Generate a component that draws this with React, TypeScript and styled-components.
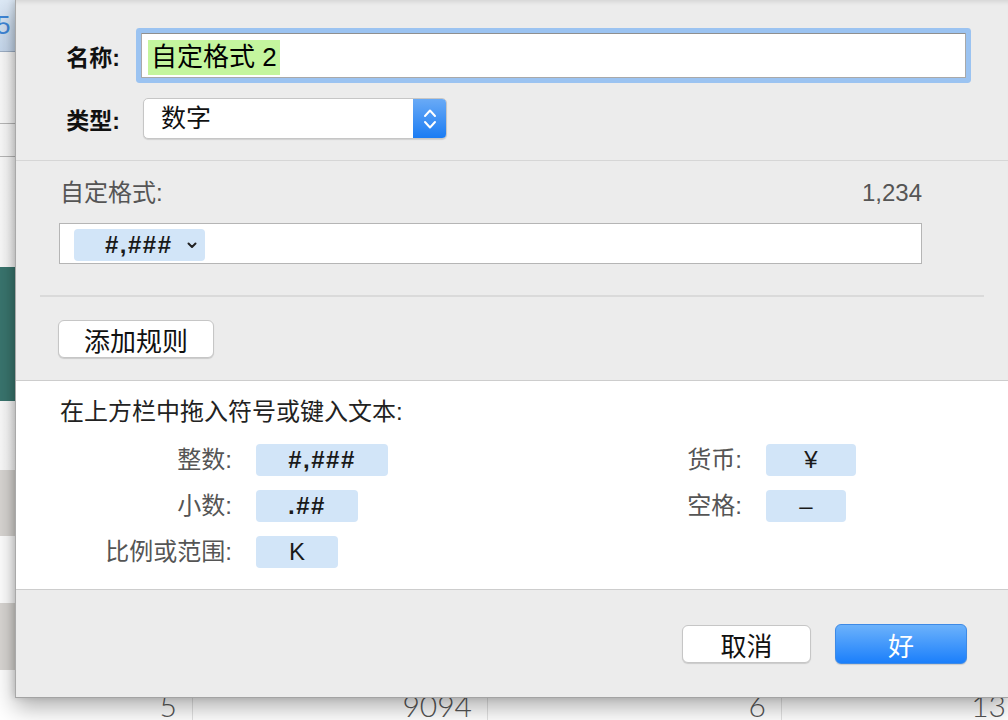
import styled, { createGlobalStyle } from 'styled-components';

const GlobalStyle = createGlobalStyle`
  html, body {
    margin: 0;
    padding: 0;
  }
  body {
    width: 1008px;
    height: 720px;
    overflow: hidden;
    background: #ffffff;
    font-family: "Liberation Sans", "Noto Sans CJK SC", sans-serif;
  }
`;

const Page = styled.div`
  position: relative;
  width: 1008px;
  height: 720px;
  overflow: hidden;
`;

/* spreadsheet behind the sheet dialog */
const Sheet = styled.div`
  display: flex;
  flex-direction: column;
  height: 100%;
`;

const tones = {
  header: 'linear-gradient(#dde9f6, #c7d9ee)',
  plain: 'linear-gradient(90deg, #fbfbfb, #ebebeb)',
  teal: '#3a766f',
  shade: '#d9d6d3',
  white: '#ffffff',
};

const SheetRow = styled.div<{ $h: number; $tone: keyof typeof tones; $line?: string }>`
  flex: none;
  box-sizing: border-box;
  height: ${p => p.$h}px;
  background: ${p => tones[p.$tone]};
  border-bottom: ${p => (p.$line ? `1px solid ${p.$line}` : 'none')};
  display: flex;
`;

const HeaderNum = styled.span`
  margin-left: -4px;
  font-size: 26px;
  line-height: 50px;
  color: #3f87d8;
`;

const NumCell = styled.div<{ $w: number }>`
  flex: none;
  box-sizing: border-box;
  width: ${p => p.$w}px;
  height: 100%;
  display: flex;
  align-items: flex-end;
  justify-content: flex-end;
  padding-right: 15px;
  border-right: 1px solid #e2e2e2;
  font-family: Lato, "Liberation Sans", sans-serif;
  font-weight: 300;
  font-size: 30px;
  line-height: 1;
  color: #555555;
`;

/* dialog */
const Dialog = styled.div`
  position: absolute;
  left: 15px;
  top: 0;
  width: 993px;
  height: 698px;
  box-sizing: border-box;
  display: flex;
  flex-direction: column;
  background: #ececec;
  border-left: 1px solid #a9a9a9;
  border-bottom: 1px solid #a3a3a3;
  box-shadow: 0 9px 22px rgba(0, 0, 0, 0.32), -2px 0 6px rgba(0, 0, 0, 0.12),
    inset 0 5px 4px -3px rgba(0, 0, 0, 0.1);
`;

const TopSection = styled.div`
  display: flex;
  flex-direction: column;
  gap: 20px;
  padding: 33px 0 21px;
  border-bottom: 1px solid #d6d6d6;
`;

const FieldRow = styled.div`
  display: flex;
  align-items: center;
`;

const FieldLabel = styled.div`
  width: 104px;
  margin-right: 21px;
  text-align: right;
  font-size: 23px;
  font-weight: bold;
  color: #111111;
`;

const NameField = styled.div`
  width: 825px;
  height: 45px;
  box-sizing: border-box;
  display: flex;
  align-items: center;
  padding-left: 6px;
  background: #ffffff;
  border: 1px solid #a9a9a9;
  border-top-color: #8f8f8f;
  border-radius: 1px;
  box-shadow: 0 0 0 5px #9bc3f1;
`;

const Selected = styled.span`
  margin-top: 4px;
  padding: 0 3px;
  line-height: 35px;
  font-size: 26px;
  color: #000000;
  background: #c4f59e;
`;

const Select = styled.div`
  margin-left: 2px;
  width: 304px;
  height: 41px;
  box-sizing: border-box;
  display: flex;
  overflow: hidden;
  background: #ffffff;
  border: 1px solid #c6c6c6;
  border-radius: 5px;
  box-shadow: 0 1px 1px rgba(0, 0, 0, 0.12);
`;

const SelectText = styled.div`
  flex: 1;
  padding-left: 17px;
  font-size: 25px;
  line-height: 39px;
  color: #111111;
`;

const Stepper = styled.div`
  width: 33px;
  display: flex;
  align-items: center;
  justify-content: center;
  background: linear-gradient(#69aaf6, #1b7cf3);
`;

const FormatSection = styled.div`
  display: flex;
  flex-direction: column;
  padding: 17px 0 22px;
`;

const FormatHeader = styled.div`
  display: flex;
  justify-content: space-between;
  padding: 0 86px 0 44px;
  font-size: 24px;
  line-height: 30px;
  color: #555555;
`;

const TokenField = styled.div`
  margin: 15px 86px 0 43px;
  height: 41px;
  box-sizing: border-box;
  display: flex;
  align-items: center;
  padding: 0 14px;
  background: #ffffff;
  border: 1px solid #b5b5b5;
`;

const FieldToken = styled.div`
  width: 131px;
  height: 32px;
  box-sizing: border-box;
  display: flex;
  align-items: center;
  gap: 14px;
  padding-left: 31px;
  margin-top: 2px;
  border-radius: 4px;
  background: #d2e5f8;
  font-size: 24px;
  font-weight: bold;
  letter-spacing: 1.5px;
  color: #1a1a1a;
`;

const Divider = styled.div`
  margin: 31px 24px 0;
  border-top: 2px solid #dadada;
`;

const ButtonRow = styled.div`
  padding: 23px 0 0 42px;
`;

const PushButton = styled.button<{ $w: number; $primary?: boolean }>`
  width: ${p => p.$w}px;
  height: ${p => (p.$primary ? 40 : 38)}px;
  box-sizing: border-box;
  padding: 0;
  border-radius: 6px;
  font-family: "Liberation Sans", "Noto Sans CJK SC", sans-serif;
  font-size: 26px;
  color: ${p => (p.$primary ? '#ffffff' : '#111111')};
  background: ${p => (p.$primary ? 'linear-gradient(#6cb2fb, #1b7ffb)' : '#ffffff')};
  border: 1px solid ${p => (p.$primary ? '#3d8ae6' : '#c6c6c6')};
  box-shadow: 0 1px 1px rgba(0, 0, 0, 0.14);
`;

const SymbolSection = styled.div`
  background: #ffffff;
  border-top: 1px solid #cdcdcd;
  border-bottom: 1px solid #cdcdcd;
  padding: 16px 0 21px;
`;

const Hint = styled.div`
  padding-left: 44px;
  font-size: 24px;
  line-height: 30px;
  color: #222222;
`;

const SymbolGrid = styled.div`
  margin-top: 17px;
  padding-left: 44px;
  display: grid;
  grid-template-columns: 172px 132px 330px 90px;
  grid-auto-rows: 32px;
  column-gap: 24px;
  row-gap: 14px;
`;

const SymLabel = styled.div`
  text-align: right;
  font-size: 24px;
  line-height: 32px;
  color: #555555;
`;

const SymToken = styled.div<{ $w: number; $bold?: boolean }>`
  width: ${p => p.$w}px;
  height: 32px;
  border-radius: 4px;
  background: #d2e5f8;
  text-align: center;
  font-size: 24px;
  line-height: 32px;
  font-weight: ${p => (p.$bold ? 'bold' : 'normal')};
  letter-spacing: ${p => (p.$bold ? '1.5px' : '0')};
  color: #1a1a1a;
`;

const Footer = styled.div`
  flex: 1;
  display: flex;
  justify-content: flex-end;
  align-items: flex-start;
  gap: 24px;
  padding: 34px 41px 0 0;
  box-sizing: border-box;
`;

const ButtonSlot = styled.div`
  height: 40px;
  display: flex;
  align-items: center;
`;

const Chevron = () => (
  <svg width="10" height="8" viewBox="0 0 10 8">
    <path d="M1.5 2.5 L5 6 L8.5 2.5" fill="none" stroke="#222" strokeWidth="2" strokeLinecap="round" strokeLinejoin="round" />
  </svg>
);

const StepperArrows = () => (
  <svg width="14" height="28" viewBox="0 0 14 28">
    <path d="M2 11 L7 5.5 L12 11 M2 17 L7 22.5 L12 17" fill="none" stroke="#ffffff" strokeWidth="2" strokeLinecap="round" strokeLinejoin="round" />
  </svg>
);

const symbols = [
  { label: '整数:', value: '#,###', w: 132, bold: true },
  { label: '货币:', value: '¥', w: 90 },
  { label: '小数:', value: '.##', w: 102, bold: true },
  { label: '空格:', value: '–', w: 80 },
  { label: '比例或范围:', value: 'K', w: 82 },
];

export default function App() {
  return (
    <Page>
      <GlobalStyle />
      <Sheet>
        <SheetRow $h={52} $tone="header" $line="#9eb0c6">
          <HeaderNum>5</HeaderNum>
        </SheetRow>
        <SheetRow $h={72} $tone="plain" $line="#b8b8b8" />
        <SheetRow $h={33} $tone="plain" $line="#b8b8b8" />
        <SheetRow $h={110} $tone="plain" />
        <SheetRow $h={134} $tone="teal" />
        <SheetRow $h={69} $tone="plain" />
        <SheetRow $h={66} $tone="shade" />
        <SheetRow $h={67} $tone="white" />
        <SheetRow $h={67} $tone="shade" />
        <SheetRow $h={50} $tone="white">
          <NumCell $w={193}>5</NumCell>
          <NumCell $w={295}>9094</NumCell>
          <NumCell $w={294}>6</NumCell>
          <NumCell $w={240}>13</NumCell>
        </SheetRow>
      </Sheet>

      <Dialog>
        <TopSection>
          <FieldRow>
            <FieldLabel>名称:</FieldLabel>
            <NameField>
              <Selected>自定格式 2</Selected>
            </NameField>
          </FieldRow>
          <FieldRow>
            <FieldLabel>类型:</FieldLabel>
            <Select>
              <SelectText>数字</SelectText>
              <Stepper>
                <StepperArrows />
              </Stepper>
            </Select>
          </FieldRow>
        </TopSection>

        <FormatSection>
          <FormatHeader>
            <span>自定格式:</span>
            <span>1,234</span>
          </FormatHeader>
          <TokenField>
            <FieldToken>
              #,###
              <Chevron />
            </FieldToken>
          </TokenField>
          <Divider />
          <ButtonRow>
            <PushButton $w={156}>添加规则</PushButton>
          </ButtonRow>
        </FormatSection>

        <SymbolSection>
          <Hint>在上方栏中拖入符号或键入文本:</Hint>
          <SymbolGrid>
            {symbols.map(s => [
              <SymLabel key={s.label}>{s.label}</SymLabel>,
              <div key={s.label + 'v'}>
                <SymToken $w={s.w} $bold={s.bold}>{s.value}</SymToken>
              </div>,
            ])}
          </SymbolGrid>
        </SymbolSection>

        <Footer>
          <ButtonSlot>
            <PushButton $w={129}>取消</PushButton>
          </ButtonSlot>
          <ButtonSlot>
            <PushButton $w={132} $primary>好</PushButton>
          </ButtonSlot>
        </Footer>
      </Dialog>
    </Page>
  );
}
